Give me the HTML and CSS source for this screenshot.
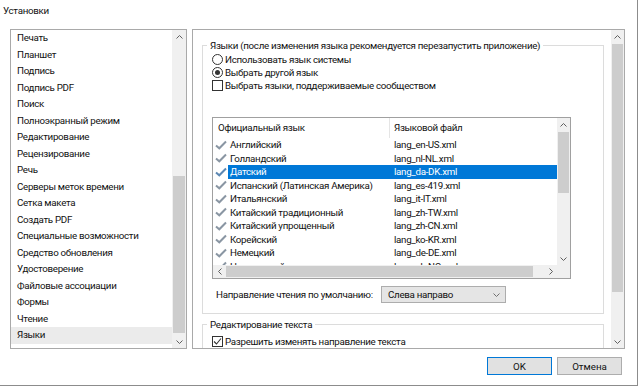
FILE: index.html
```html
<!DOCTYPE html>
<html lang="ru">
<head>
    <meta charset="UTF-8">
    <title>Установки</title>
    <link rel="stylesheet" href="styles.css">
</head>
<body>
<div class="dialog">
    <div class="title">Установки</div>

    <div class="main">
        <!-- список разделов -->
        <div class="cats">
            <ul class="cat-list">
                <li>Печать</li>
                <li>Планшет</li>
                <li>Подпись</li>
                <li>Подпись PDF</li>
                <li>Поиск</li>
                <li>Полноэкранный режим</li>
                <li>Редактирование</li>
                <li>Рецензирование</li>
                <li>Речь</li>
                <li>Серверы меток времени</li>
                <li>Сетка макета</li>
                <li>Создать PDF</li>
                <li>Специальные возможности</li>
                <li>Средство обновления</li>
                <li>Удостоверение</li>
                <li>Файловые ассоциации</li>
                <li>Формы</li>
                <li>Чтение</li>
                <li class="active">Языки</li>
            </ul>
            <div class="vscroll cats-scroll">
                <div class="sb-btn"><svg width="7" height="4" viewBox="0 0 7 4"><path d="M0.5 3.5L3.5 0.5L6.5 3.5" fill="none" stroke="#606060"/></svg></div>
                <div class="sb-track"><div class="sb-thumb"></div></div>
                <div class="sb-btn"><svg width="7" height="4" viewBox="0 0 7 4"><path d="M0.5 0.5L3.5 3.5L6.5 0.5" fill="none" stroke="#606060"/></svg></div>
            </div>
        </div>

        <!-- настройки языка -->
        <div class="panel">
            <div class="panel-body">
                <fieldset class="group">
                    <legend>Языки (после изменения языка рекомендуется перезапустить приложение)</legend>
                    <div class="opt"><span class="radio"></span>Использовать язык системы</div>
                    <div class="opt"><span class="radio on"></span>Выбрать другой язык</div>
                    <div class="opt"><span class="check"></span>Выбрать языки, поддерживаемые сообществом</div>

                    <div class="lv">
                        <div class="lv-main">
                            <div class="lv-head">
                                <div class="h-name">Официальный язык</div>
                                <div class="h-file">Языковой файл</div>
                            </div>
                            <div class="lv-rows">
                                <div class="lv-row"><span class="ico"><svg width="12" height="10" viewBox="0 0 12 10"><path d="M1 5.5L4.3 8.3L11 1.5" fill="none" stroke="#8a96a3" stroke-width="2"/></svg></span><span class="name">Английский</span><span class="file">lang_en-US.xml</span></div>
                                <div class="lv-row"><span class="ico"><svg width="12" height="10" viewBox="0 0 12 10"><path d="M1 5.5L4.3 8.3L11 1.5" fill="none" stroke="#8a96a3" stroke-width="2"/></svg></span><span class="name">Голландский</span><span class="file">lang_nl-NL.xml</span></div>
                                <div class="lv-row sel"><span class="ico"><svg width="12" height="10" viewBox="0 0 12 10"><path d="M1 5.5L4.3 8.3L11 1.5" fill="none" stroke="#5d88b3" stroke-width="2"/></svg></span><span class="name">Датский</span><span class="file">lang_da-DK.xml</span></div>
                                <div class="lv-row"><span class="ico"><svg width="12" height="10" viewBox="0 0 12 10"><path d="M1 5.5L4.3 8.3L11 1.5" fill="none" stroke="#8a96a3" stroke-width="2"/></svg></span><span class="name">Испанский (Латинская Америка)</span><span class="file">lang_es-419.xml</span></div>
                                <div class="lv-row"><span class="ico"><svg width="12" height="10" viewBox="0 0 12 10"><path d="M1 5.5L4.3 8.3L11 1.5" fill="none" stroke="#8a96a3" stroke-width="2"/></svg></span><span class="name">Итальянский</span><span class="file">lang_it-IT.xml</span></div>
                                <div class="lv-row"><span class="ico"><svg width="12" height="10" viewBox="0 0 12 10"><path d="M1 5.5L4.3 8.3L11 1.5" fill="none" stroke="#8a96a3" stroke-width="2"/></svg></span><span class="name">Китайский традиционный</span><span class="file">lang_zh-TW.xml</span></div>
                                <div class="lv-row"><span class="ico"><svg width="12" height="10" viewBox="0 0 12 10"><path d="M1 5.5L4.3 8.3L11 1.5" fill="none" stroke="#8a96a3" stroke-width="2"/></svg></span><span class="name">Китайский упрощенный</span><span class="file">lang_zh-CN.xml</span></div>
                                <div class="lv-row"><span class="ico"><svg width="12" height="10" viewBox="0 0 12 10"><path d="M1 5.5L4.3 8.3L11 1.5" fill="none" stroke="#8a96a3" stroke-width="2"/></svg></span><span class="name">Корейский</span><span class="file">lang_ko-KR.xml</span></div>
                                <div class="lv-row"><span class="ico"><svg width="12" height="10" viewBox="0 0 12 10"><path d="M1 5.5L4.3 8.3L11 1.5" fill="none" stroke="#8a96a3" stroke-width="2"/></svg></span><span class="name">Немецкий</span><span class="file">lang_de-DE.xml</span></div>
                                <div class="lv-row"><span class="ico"><svg width="12" height="10" viewBox="0 0 12 10"><path d="M1 5.5L4.3 8.3L11 1.5" fill="none" stroke="#8a96a3" stroke-width="2"/></svg></span><span class="name">Норвежский</span><span class="file">lang_nb-NO.xml</span></div>
                            </div>
                            <div class="hscroll">
                                <div class="hs-btn"><svg width="4" height="7" viewBox="0 0 4 7"><path d="M3.5 0.5L0.5 3.5L3.5 6.5" fill="none" stroke="#606060"/></svg></div>
                                <div class="hs-thumb"></div>
                                <div class="hs-track"></div>
                                <div class="hs-btn"><svg width="4" height="7" viewBox="0 0 4 7"><path d="M0.5 0.5L3.5 3.5L0.5 6.5" fill="none" stroke="#606060"/></svg></div>
                            </div>
                        </div>
                        <div class="vscroll lv-scroll">
                            <div class="sb-btn"><svg width="7" height="4" viewBox="0 0 7 4"><path d="M0.5 3.5L3.5 0.5L6.5 3.5" fill="none" stroke="#606060"/></svg></div>
                            <div class="sb-track"><div class="sb-thumb"></div></div>
                            <div class="sb-btn"><svg width="7" height="4" viewBox="0 0 7 4"><path d="M0.5 0.5L3.5 3.5L6.5 0.5" fill="none" stroke="#606060"/></svg></div>
                            <div class="corner"></div>
                        </div>
                    </div>

                    <div class="dir-row">
                        <span class="dir-label">Направление чтения по умолчанию:</span>
                        <div class="select">
                            <span>Слева направо</span>
                            <svg width="7" height="4" viewBox="0 0 7 4"><path d="M0.5 0.5L3.5 3.5L6.5 0.5" fill="none" stroke="#707070"/></svg>
                        </div>
                    </div>
                </fieldset>

                <fieldset class="group group-edit">
                    <legend>Редактирование текста</legend>
                    <div class="opt"><span class="check"><svg width="9" height="9" viewBox="0 0 9 9"><path d="M1 4.5L3.5 7L8 1.5" fill="none" stroke="#333" stroke-width="1.1"/></svg></span>Разрешить изменять направление текста</div>
                </fieldset>
            </div>
            <div class="vscroll panel-scroll">
                <div class="sb-btn"><svg width="7" height="4" viewBox="0 0 7 4"><path d="M0.5 3.5L3.5 0.5L6.5 3.5" fill="none" stroke="#606060"/></svg></div>
                <div class="sb-track"><div class="sb-thumb"></div></div>
                <div class="sb-btn"><svg width="7" height="4" viewBox="0 0 7 4"><path d="M0.5 0.5L3.5 3.5L6.5 0.5" fill="none" stroke="#606060"/></svg></div>
            </div>
        </div>
    </div>

    <div class="footer">
        <button class="btn btn-default">OK</button>
        <button class="btn">Отмена</button>
    </div>
</div>
</body>
</html>
```

FILE: styles.css
```css
*{
    box-sizing: border-box;
}
body{
    margin: 0;
    font-family: Roboto, "Noto Sans", sans-serif;
    font-size: 9.75px;
    letter-spacing: -0.3px;
    color: #111;
    background: #fff;
}
.dialog{
    width: 638px;
    height: 386px;
    border-right: 1px solid #8c8c8c;
    border-bottom: 1px solid #8c8c8c;
    display: flex;
    flex-direction: column;
}
.title{
    height: 21px;
    line-height: 21px;
    padding-left: 3px;
}
.main{
    display: flex;
    gap: 5px;
    padding: 8px 0 0 10px;
}

/* список разделов */
.cats{
    width: 177px;
    height: 320px;
    border: 1px solid #a9a9a9;
    display: flex;
}
.cat-list{
    list-style: none;
    margin: 0;
    padding: 0;
    flex: 1;
    overflow: hidden;
}
.cat-list li{
    height: 16.5px;
    line-height: 16.5px;
    padding-left: 6px;
    white-space: nowrap;
}
.cat-list .active{
    background: #ebebeb;
}

/* полосы прокрутки */
.vscroll{
    display: flex;
    flex-direction: column;
    background: #f0f0f0;
}
.sb-btn{
    height: 13px;
    flex: none;
    display: flex;
    align-items: center;
    justify-content: center;
}
.sb-track{
    flex: 1;
}
.sb-thumb{
    background: #cdcdcd;
    margin: 0 1px;
}
.cats-scroll{
    width: 14px;
}
.cats-scroll .sb-thumb{
    margin-top: 133px;
    height: 157px;
}
.panel-scroll{
    width: 13px;
}
.panel-scroll .sb-thumb{
    margin-top: 1px;
    height: 248px;
}
.lv-scroll{
    width: 13px;
}
.lv-scroll .sb-thumb{
    margin-top: 1px;
    height: 61px;
}
.corner{
    height: 13px;
    flex: none;
    background: #f0f0f0;
}

/* правая панель */
.panel{
    width: 433px;
    height: 320px;
    border: 1px solid #a9a9a9;
    display: flex;
}
.panel-body{
    flex: 1;
    overflow: hidden;
    padding: 8px 0 0 9px;
}
.group{
    width: 402px;
    margin: 0;
    padding: 0 4px 10px 4px;
    border: 1px solid #dcdcdc;
}
.group legend{
    padding: 0 3px;
    line-height: 15px;
    white-space: nowrap;
}
.group-edit{
    margin-top: 3px;
}
.group-edit .opt{
    margin-top: 3px;
}
.opt{
    display: flex;
    align-items: center;
    gap: 2px;
    height: 13px;
    padding-left: 5px;
    white-space: nowrap;
}
.radio{
    width: 11px;
    height: 11px;
    border: 1px solid #333;
    border-radius: 50%;
    display: flex;
    align-items: center;
    justify-content: center;
}
.radio.on::after{
    content: "";
    width: 5px;
    height: 5px;
    border-radius: 50%;
    background: #333;
}
.check{
    width: 11px;
    height: 11px;
    border: 1px solid #333;
    display: flex;
    align-items: center;
    justify-content: center;
}

/* таблица языков */
.lv{
    width: 359px;
    height: 162px;
    margin: 25px 0 0 5px;
    border: 1px solid #a0a0a0;
    display: flex;
}
.lv-main{
    flex: 1;
    display: flex;
    flex-direction: column;
    overflow: hidden;
}
.lv-head{
    height: 20px;
    flex: none;
    display: flex;
    line-height: 20px;
}
.h-name{
    width: 177px;
    padding-left: 5px;
    border-right: 1px solid #e5e5e5;
}
.h-file{
    padding-left: 4px;
}
.lv-rows{
    flex: 1;
    overflow: hidden;
}
.lv-row{
    height: 13.5px;
    line-height: 13.5px;
    display: flex;
    white-space: nowrap;
}
.ico{
    width: 15px;
    padding-left: 2px;
    display: flex;
    align-items: center;
}
.name{
    width: 162px;
    padding-left: 2px;
}
.file{
    flex: 1;
    padding-left: 4px;
}
.sel .name,
.sel .file{
    background: #0078d7;
    color: #fff;
}
.hscroll{
    height: 13px;
    flex: none;
    display: flex;
    background: #f0f0f0;
}
.hs-btn{
    width: 13px;
    display: flex;
    align-items: center;
    justify-content: center;
}
.hs-thumb{
    width: 307px;
    margin: 1px 0;
    background: #cdcdcd;
}
.hs-track{
    flex: 1;
}

/* направление чтения */
.dir-row{
    display: flex;
    align-items: center;
    margin: 7px 0 0 9px;
}
.dir-label{
    width: 165px;
    white-space: nowrap;
}
.select{
    width: 125px;
    height: 17px;
    border: 1px solid #adadad;
    background: #e5e5e5;
    display: flex;
    align-items: center;
    justify-content: space-between;
    padding: 0 5px 0 6px;
}

/* кнопки */
.footer{
    display: flex;
    justify-content: flex-end;
    gap: 5px;
    padding: 8px 15px 0 0;
}
.btn{
    width: 65px;
    height: 18px;
    padding: 0;
    border: 1px solid #adadad;
    background: #e1e1e1;
    font: inherit;
    color: #111;
}
.btn-default{
    border-color: #0078d7;
}
```
